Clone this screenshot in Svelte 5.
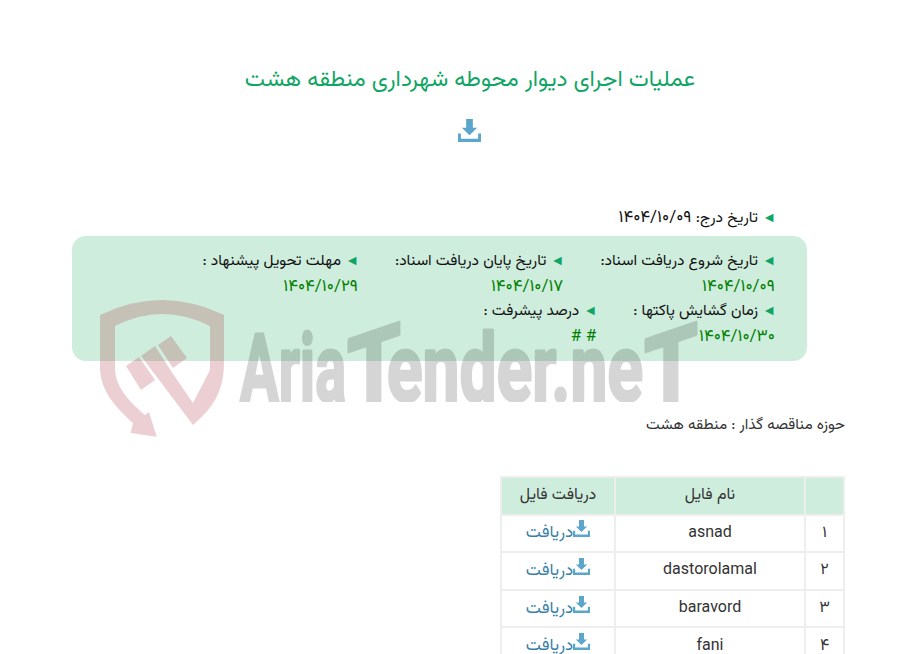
<script lang="ts">
  const fechas = [
    { etiqueta: 'تاریخ شروع دریافت اسناد:', valor: '۱۴۰۴/۱۰/۰۹' },
    { etiqueta: 'تاریخ پایان دریافت اسناد:', valor: '۱۴۰۴/۱۰/۱۷' },
    { etiqueta: 'مهلت تحویل پیشنهاد :', valor: '۱۴۰۴/۱۰/۲۹' },
    { etiqueta: 'زمان گشایش پاکتها :', valor: '۱۴۰۴/۱۰/۳۰' },
    { etiqueta: 'درصد پیشرفت :', valor: '# #' }
  ];

  const archivos = ['asnad', 'dastorolamal', 'baravord', 'fani'];
  const cifras = ['۱', '۲', '۳', '۴'];
</script>

{#snippet iconoDescarga(ancho: number)}
  <svg class="icono" viewBox="0 0 24 24" width={ancho} height={ancho} aria-hidden="true">
    <path d="M8.500 0h7v9H20l-8 8-8-8h4.500z" />
    <path d="M0 15h3v5.500h18V15h3v9H0z" />
  </svg>
{/snippet}

<main class="pagina" dir="rtl">
  <h1 class="titulo">عملیات اجرای دیوار محوطه شهرداری منطقه هشت</h1>
  <div class="descarga-principal">{@render iconoDescarga(23)}</div>

  <p class="dato-suelto"><span class="flecha">◄</span> تاریخ درج: <span class="cifras">۱۴۰۴/۱۰/۰۹</span></p>

  <section class="caja">
    {#each fechas as f}
      <div class="celda">
        <div class="etiqueta"><span class="flecha">◄</span> {f.etiqueta}</div>
        <div class="valor">{f.valor}</div>
      </div>
    {/each}
  </section>

  <p class="zona">حوزه مناقصه گذار : منطقه هشت</p>

  <table class="tabla">
    <thead>
      <tr><th class="num"></th><th class="nombre">نام فایل</th><th class="bajar">دریافت فایل</th></tr>
    </thead>
    <tbody>
      {#each archivos as a, i}
        <tr>
          <td>{cifras[i]}</td>
          <td>{a}</td>
          <td class="enlace">{@render iconoDescarga(17)}دریافت</td>
        </tr>
      {/each}
    </tbody>
  </table>

  <!-- marca de agua -->
  <svg class="marca" viewBox="0 0 600 150" width="600" height="150" aria-hidden="true" direction="ltr">
    <defs>
      <clipPath id="corte"><rect x="0" y="0" width="620" height="107" /></clipPath>
    </defs>
    <path class="escudo" d="M10 20Q72 -10 134 20V67C134 100 120 115 103 130L51 61 65 51 81 76 103 108 120 75V31Q72 7 25 31V73C25 90 37 105 55 120L59 117 66.700 141.700 40.700 138 43 128C25 112 10 95 10 72z" />
    <path class="escudo" d="M68 50L81 41 97 63 83 73zM36 71L49 62 65 85 51 95z" />
    <g class="marca-letras" clip-path="url(#corte)">
      <text x="150" y="105.500" textLength="106" lengthAdjust="spacingAndGlyphs">Aria</text>
      <text class="marca-t" x="257" y="107" textLength="54" lengthAdjust="spacingAndGlyphs" transform="skewY(-19) translate(0 102.700)">T</text>
      <text x="297" y="105.500" textLength="256" lengthAdjust="spacingAndGlyphs">ender.ne</text>
      <text class="marca-t" x="554" y="107" textLength="54" lengthAdjust="spacingAndGlyphs" transform="skewY(-19) translate(0 205)">T</text>
    </g>
  </svg>
</main>

<style>
  :global(body) {
    margin: 0;
    background: #fff;
    font-family: Vazirmatn, Roboto, sans-serif;
    color: #333;
  }

  .pagina {
    position: relative;
    height: 654px;
    overflow: hidden;
    box-sizing: border-box;
    padding: 66px 78px 0 72px;
  }

  .titulo {
    margin: 0;
    padding-left: 23px;
    font-size: 22.8px;
    font-weight: 400;
    line-height: 30px;
    color: #11a565;
    text-align: center;
  }

  .descarga-principal {
    display: flex;
    justify-content: center;
    padding-left: 22px;
    margin-top: 23px;
    height: 88px;
    color: #5ba6cb;
  }

  .icono {
    fill: currentColor;
    vertical-align: top;
  }

  .dato-suelto {
    margin: 0 69px 0 0;
    height: 29px;
    font-size: 15.500px;
    line-height: 22px;
    color: #111;
  }

  .cifras {
    font-size: 17px;
  }

  .flecha {
    color: #11a565;
    font-size: 14px;
  }

  .caja {
    margin-right: 38px;
    height: 125px;
    box-sizing: border-box;
    padding: 12px 31px 0 0;
    display: flex;
    flex-wrap: wrap;
    column-gap: 36px;
    align-content: flex-start;
    background: #ceeddd;
    border-radius: 14px;
  }

  .celda {
    height: 50px;
  }

  .etiqueta {
    font-size: 15.500px;
    line-height: 26px;
    color: #111;
  }

  .valor {
    margin-right: 1px;
    font-size: 17px;
    line-height: 24px;
    color: #008000;
  }

  .zona {
    margin: 52px 0 0;
    font-size: 15.300px;
    line-height: 24px;
    color: #333;
  }

  .tabla {
    margin: 39px 0 0;
    border-collapse: collapse;
    font-size: 16px;
    color: #333;
    text-align: center;
  }

  .tabla th,
  .tabla td {
    border: 2px solid #eee;
    padding: 0;
    height: 35.600px;
    font-weight: 400;
  }

  .tabla th {
    background: #ceeddd;
  }

  .num { width: 37px; }
  .nombre { width: 188px; }
  .bajar { width: 112px; }

  .enlace {
    color: #3a7fa8;
    font-size: 17px;
    white-space: nowrap;
  }

  .enlace .icono {
    color: #5ba6cb;
  }

  .marca {
    position: absolute;
    left: 90px;
    top: 295px;
    overflow: visible;
    pointer-events: none;
  }

  .escudo { fill: rgba(168, 36, 50, 0.22); }

  .marca-letras {
    opacity: 0.16;
    font-family: Roboto, sans-serif;
    font-weight: 700;
    font-size: 95px;
    fill: #000;
    stroke: #000;
    stroke-width: 3px;
    stroke-linejoin: round;
  }

  .marca-t {
    font-size: 107px;
  }
</style>
